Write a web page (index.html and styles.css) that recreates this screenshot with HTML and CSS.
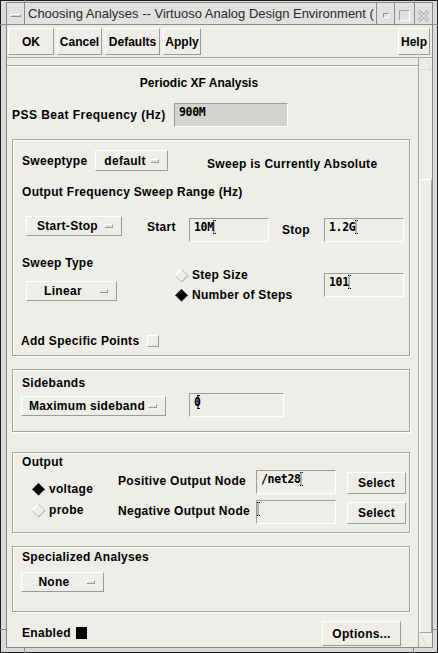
FILE: index.html
```html
<!DOCTYPE html>
<html>
<head>
<meta charset="utf-8">
<title>Choosing Analyses</title>
<link rel="stylesheet" href="styles.css">
</head>
<body>
<div class="window">
  <div class="client">
    <div class="titlebar">
      <div class="tb-menu"><span class="tb-dash"></span></div>
      <div class="tb-title">Choosing Analyses -- Virtuoso Analog Design Environment (</div>
      <div class="tb-btn tb-min"><span class="tb-minbox"></span></div>
      <div class="tb-btn tb-max"><span class="tb-maxbox"></span></div>
      <div class="tb-btn tb-close">
        <svg width="13" height="12" viewBox="0 0 13 12">
          <path d="M1.5 1 L11.5 11 M11.5 1 L1.5 11" stroke="#a9a9a9" stroke-width="3.4" fill="none"/>
          <path d="M1.5 1 L11.5 11 M11.5 1 L1.5 11" stroke="#e4e4e2" stroke-width="1.4" fill="none"/>
        </svg>
      </div>
    </div>

    <div class="toolbar">
      <div class="btn b-ok">OK</div>
      <div class="btn b-cancel">Cancel</div>
      <div class="btn b-defaults">Defaults</div>
      <div class="btn b-apply">Apply</div>
      <div class="btn b-help">Help</div>
    </div>

    <div class="scrollarea">
      <div class="viewport">
        <div class="topline"></div>
        <div class="form-title">Periodic XF Analysis</div>

        <div class="pss-row">
          <span class="pss-label">PSS Beat Frequency (Hz)</span>
          <div class="field field-disabled w-pss">900M</div>
        </div>

        <div class="group g-sweep">
          <div class="row-a">
            <span class="lbl-sweeptype">Sweeptype</span>
            <div class="dd w-default"><span class="dd-t">default</span><i class="dd-ind"></i></div>
            <span class="abs-note">Sweep is Currently Absolute</span>
          </div>
          <div class="row-b">Output Frequency Sweep Range (Hz)</div>
          <div class="row-c">
            <div class="dd w-startstop"><span class="dd-t">Start-Stop</span><i class="dd-ind"></i></div>
            <span class="lbl-start">Start</span>
            <div class="field w-80 f-c">10M<svg class="caret" width="3" height="14" viewBox="0 0 3 14"><path d="M1 0.5 V13.5" stroke="#000" stroke-dasharray="1 1"/><path d="M0 0.5 H3 M0 13.5 H3" stroke="#000" stroke-dasharray="1 1"/></svg></div>
            <span class="lbl-stop">Stop</span>
            <div class="field w-80 f-c">1.2G<svg class="caret" width="3" height="14" viewBox="0 0 3 14"><path d="M1 0.5 V13.5" stroke="#000" stroke-dasharray="1 1"/><path d="M0 0.5 H3 M0 13.5 H3" stroke="#000" stroke-dasharray="1 1"/></svg></div>
          </div>
          <div class="row-e">
            <div class="col-type">
              <div class="lbl-line">Sweep Type</div>
              <div class="dd w-linear"><span class="dd-t">Linear</span><i class="dd-ind"></i></div>
            </div>
            <div class="col-radios">
              <div class="radio">
                <svg width="15" height="15" viewBox="0 0 15 15"><path d="M1 7.5 L7.5 1" stroke="#fff" stroke-width="1.3" fill="none"/><path d="M7.5 1 L14 7.5" stroke="#b9b8b3" fill="none"/><path d="M1 7.5 L7.5 14" stroke="#b9b8b3" fill="none"/><path d="M7.5 14 L14 7.5" stroke="#8e8e8e" fill="none"/></svg>
                <span>Step Size</span>
              </div>
              <div class="radio r2">
                <svg width="15" height="15" viewBox="0 0 15 15"><path d="M1 7.5 L7.5 1 L14 7.5 L7.5 14 Z" fill="#000"/><path d="M1.5 8 L7.5 14 L13.5 8" stroke="#d8d8d8" fill="none"/></svg>
                <span>Number of Steps</span>
              </div>
            </div>
            <div class="field w-80 f-e">101<svg class="caret" width="3" height="14" viewBox="0 0 3 14"><path d="M1 0.5 V13.5" stroke="#000" stroke-dasharray="1 1"/><path d="M0 0.5 H3 M0 13.5 H3" stroke="#000" stroke-dasharray="1 1"/></svg></div>
          </div>
          <div class="row-f">
            <span class="lbl-asp">Add Specific Points</span>
            <span class="chk"></span>
          </div>
        </div>

        <div class="group g-side">
          <div class="lbl-line">Sidebands</div>
          <div class="side-row">
            <div class="dd w-maxside"><span class="dd-t">Maximum sideband</span><i class="dd-ind"></i></div>
            <div class="field w-side">0<svg class="caret c0" width="3" height="14" viewBox="0 0 3 14"><path d="M1 0.5 V13.5" stroke="#000"/><path d="M0 0.5 H3 M0 13.5 H3" stroke="#000"/></svg></div>
          </div>
        </div>

        <div class="group g-out">
          <div class="lbl-out">Output</div>
          <div class="out-sec">
            <div class="out-radios">
              <div class="radio">
                <svg width="15" height="15" viewBox="0 0 15 15"><path d="M1 7.5 L7.5 1 L14 7.5 L7.5 14 Z" fill="#000"/><path d="M1.5 8 L7.5 14 L13.5 8" stroke="#d8d8d8" fill="none"/></svg>
                <span>voltage</span>
              </div>
              <div class="radio r-probe">
                <svg width="15" height="15" viewBox="0 0 15 15"><path d="M1 7.5 L7.5 1" stroke="#fff" stroke-width="1.3" fill="none"/><path d="M7.5 1 L14 7.5" stroke="#b9b8b3" fill="none"/><path d="M1 7.5 L7.5 14" stroke="#b9b8b3" fill="none"/><path d="M7.5 14 L14 7.5" stroke="#8e8e8e" fill="none"/></svg>
                <span>probe</span>
              </div>
            </div>
            <div class="out-nodes">
              <div class="node-row">
                <span class="lbl-node">Positive Output Node</span>
                <div class="field w-80">/net28<svg class="caret" width="3" height="14" viewBox="0 0 3 14"><path d="M1 0.5 V13.5" stroke="#000" stroke-dasharray="1 1"/><path d="M0 0.5 H3 M0 13.5 H3" stroke="#000" stroke-dasharray="1 1"/></svg></div>
                <div class="btn b-select">Select</div>
              </div>
              <div class="node-row nr2">
                <span class="lbl-node">Negative Output Node</span>
                <div class="field w-80 f-empty"><svg class="caret" width="3" height="14" viewBox="0 0 3 14"><path d="M1 0.5 V13.5" stroke="#000" stroke-dasharray="1 1"/><path d="M0 0.5 H3 M0 13.5 H3" stroke="#000" stroke-dasharray="1 1"/></svg></div>
                <div class="btn b-select">Select</div>
              </div>
            </div>
          </div>
        </div>

        <div class="group g-spec">
          <div class="lbl-line">Specialized Analyses</div>
          <div class="dd w-none"><span class="dd-t">None</span><i class="dd-ind"></i></div>
        </div>

        <div class="enabled-row">
          <span class="lbl-enabled">Enabled</span>
          <span class="chk-on"></span>
          <div class="btn b-options">Options...</div>
        </div>
      </div>

      <div class="scrollbar">
        <div class="sb-up">
          <svg width="12" height="11" viewBox="0 0 12 11"><path d="M0.5 10.5 L6 0.5" stroke="#fff" stroke-dasharray="1 1" fill="none"/><path d="M6 0.5 L11.5 10.5 L0.5 10.5" stroke="#c8c7c3" stroke-dasharray="1 1" fill="none"/></svg>
        </div>
        <div class="sb-track"><div class="sb-thumb"></div></div>
        <div class="sb-down">
          <svg width="12" height="11" viewBox="0 0 12 11"><path d="M0.5 0.5 L11.5 0.5 L6 10.5" stroke="#fff" stroke-dasharray="1 1" fill="none"/><path d="M6 10.5 L0.5 0.5" stroke="#c8c7c3" stroke-dasharray="1 1" fill="none"/></svg>
        </div>
      </div>
    </div>
  </div>

  <span class="tick tick-tl-v"></span>
  <span class="tick tick-tr-v"></span>
  <span class="tick tick-bl-v"></span>
  <span class="tick tick-br-v"></span>
  <span class="tick tick-lt-h"></span>
  <span class="tick tick-lb-h"></span>
  <span class="tick tick-rt-h"></span>
  <span class="tick tick-rb-h"></span>
</div>
</body>
</html>
```

FILE: styles.css
```css
* { box-sizing: border-box; }
html, body { margin: 0; padding: 0; }
body {
  width: 438px;
  height: 653px;
  overflow: hidden;
  background: #000;
  font-family: "Liberation Sans", Arial, sans-serif;
  font-weight: bold;
  font-size: 12px;
  color: #000;
}

.window {
  position: relative;
  width: 438px;
  height: 653px;
  border: 1px solid #1c1c1c;
  background: #dadad8;
  padding: 1px 4px 4px 5px;
}

.client {
  height: 100%;
  border: 1px solid #8a8a8a;
  background: #eeede8;
  display: flex;
  flex-direction: column;
}

/* title bar */
.titlebar {
  height: 22px;
  flex: none;
  display: flex;
  border-bottom: 1px solid #8a8a8a;
  background: #e1e1df;
  font-weight: normal;
}
.tb-menu { width: 18px; border-right: 1px solid #8a8a8a; display: flex; justify-content: center; }
.tb-dash {
  width: 11px; height: 3px; margin-top: 11px;
  border: 1px solid; border-color: #fff #8c8c8c #8c8c8c #fff;
  background: #d0d0ce;
}
.tb-title {
  flex: 1;
  min-width: 0;
  padding-left: 3px;
  overflow: hidden;
  white-space: nowrap;
  line-height: 21px;
  font-size: 13px;
  color: #2a2a2a;
}
.tb-btn { border-left: 1px solid #8a8a8a; display: flex; justify-content: center; align-items: flex-start; }
.tb-min { width: 18px; }
.tb-max { width: 20px; }
.tb-close { width: 18px; }
.tb-minbox {
  width: 6px; height: 5px; margin-top: 10px;
  border: 1px solid; border-color: #8c8c8c #fff #fff #8c8c8c;
}
.tb-maxbox {
  width: 11px; height: 11px; margin-top: 7px;
  border: 1px solid; border-color: #a0a0a0 #fff #fff #a0a0a0;
}
.tb-close svg { margin-top: 7px; }

/* toolbar */
.toolbar {
  height: 33px;
  flex: none;
  display: flex;
  align-items: flex-start;
  gap: 3px;
  padding: 3px 2px 0 1px;
  border-bottom: 1px solid #a4a4a4;
}
.btn {
  display: flex;
  align-items: center;
  justify-content: center;
  border: 1px solid;
  border-color: #fff #9a9a9a #9a9a9a #fff;
  background: #eeede8;
  white-space: nowrap;
}
.toolbar .btn { height: 27px; }
.b-ok { width: 46px; }
.b-cancel { width: 45px; }
.b-defaults { width: 55px; }
.b-apply { width: 38px; }
.b-help { width: 32px; margin-left: auto; }

/* scroll area */
.scrollarea { flex: 1; display: flex; min-height: 0; }
.viewport { flex: 1; overflow: hidden; letter-spacing: 0.3px; }

.topline {
  margin-top: 7px;
  height: 2px;
  border-top: 1px solid #a4a4a4;
  border-bottom: 1px solid #fff;
}
.form-title { width: 384px; text-align: center; line-height: 16px; margin-top: 8px; letter-spacing: 0; }

.pss-row { display: flex; align-items: center; height: 24px; margin-top: 12px; padding-left: 5px; }
.pss-label { width: 162px; white-space: nowrap; letter-spacing: 0.45px; }

/* text fields */
.field {
  height: 24px;
  border: 1px solid;
  border-color: #9c9c9c #fff #fff #9c9c9c;
  background: #eeede8;
  font-family: "DejaVu Sans Mono", "Liberation Mono", monospace;
  font-weight: bold;
  font-size: 11.5px;
  letter-spacing: -0.3px;
  line-height: 14px;
  padding: 1px 0 0 4px;
  white-space: nowrap;
  flex: none;
}
.field-disabled { background: #d5d3cd; }
.w-pss { width: 114px; }
.w-80 { width: 80px; }
.w-side { width: 95px; margin-left: 23px; }
.caret { vertical-align: top; margin-left: -1px; }
.caret.c0 { margin-left: -4px; }

/* group boxes */
.group {
  width: 398px;
  margin: 12px 0 0 5px;
  border: 1px solid #a4a4a4;
  box-shadow: inset 1px 1px 0 #fff, 1px 1px 0 #fff;
}

/* option menus */
.dd {
  display: flex;
  align-items: center;
  height: 20px;
  border: 1px solid;
  border-color: #fff #9a9a9a #9a9a9a #fff;
  flex: none;
}
.dd-t { flex: 1; text-align: center; white-space: nowrap; }
.dd-ind {
  width: 9px; height: 4px;
  margin-right: 8px;
  border: 1px solid;
  border-color: #fff #9a9a9a #9a9a9a #fff;
  background: #e2e1dc;
}
.w-default { width: 73px; padding-left: 4px; }
.w-startstop { width: 96px; padding-left: 4px; }
.w-linear { width: 91px; margin-left: 4px; margin-top: 10px; }
.w-maxside { width: 145px; margin-left: 8px; margin-top: 3px; padding-left: 4px; }
.w-none { width: 83px; margin-left: 8px; margin-top: 7px; }

.lbl-line { line-height: 16px; padding-left: 9px; white-space: nowrap; }

/* sweep group */
.g-sweep { margin-top: 12px; padding: 10px 0 6px 0; }
.row-a { display: flex; align-items: center; height: 21px; padding-left: 9px; }
.row-a .dd { height: 21px; }
.lbl-sweeptype { width: 73px; }
.abs-note { margin-left: 39px; margin-top: 6px; white-space: nowrap; }
.row-b { margin-top: 13px; line-height: 16px; padding-left: 9px; white-space: nowrap; }
.row-c { display: flex; align-items: flex-start; margin-top: 16px; padding-left: 13px; }
.lbl-start { width: 42px; margin-left: 25px; margin-top: 3px; line-height: 16px; }
.lbl-stop { width: 42px; margin-left: 13px; margin-top: 6px; line-height: 16px; }
.f-c { margin-top: 2px; }
.row-e { display: flex; align-items: flex-start; margin-top: 13px; padding-left: 9px; }
.col-type { width: 152px; display: flex; flex-direction: column; align-items: flex-start; }
.col-type .lbl-line { padding-left: 0; }
.col-radios { width: 150px; padding-top: 12px; }
.radio { display: flex; align-items: center; height: 16px; gap: 3px; white-space: nowrap; }
.radio svg { flex: none; }
.r2 { margin-top: 4px; }
.f-e { margin-top: 18px; }
.row-f { display: flex; align-items: center; height: 16px; margin-top: 30px; padding-left: 8px; }
.lbl-asp { width: 126px; white-space: nowrap; }
.chk {
  width: 12px; height: 12px;
  border: 1px solid;
  border-color: #fff #9a9a9a #9a9a9a #fff;
}

/* sidebands */
.g-side { margin-top: 13px; padding: 5px 0 14px 0; }
.side-row { display: flex; align-items: flex-start; margin-top: 2px; }

/* output */
.g-out { margin-top: 20px; padding: 2px 0 8px 0; }
.lbl-out { line-height: 15px; padding-left: 9px; }
.out-sec { display: flex; align-items: flex-start; }
.out-radios { width: 87px; margin-left: 18px; padding-top: 11px; }
.r-probe { margin-top: 5px; }
.node-row { display: flex; align-items: flex-start; height: 24px; }
.nr2 { margin-top: 6px; }
.lbl-node { width: 138px; margin-top: 3px; line-height: 16px; white-space: nowrap; }
.b-select { width: 59px; height: 22px; margin-left: 11px; margin-top: 2px; }
.f-empty { padding-left: 1px; }

/* specialized */
.g-spec { margin-top: 13px; padding: 2px 0 19px 0; }

/* enabled row */
.enabled-row { display: flex; align-items: flex-start; height: 25px; margin-top: 9px; }
.lbl-enabled { width: 54px; margin-left: 15px; margin-top: 4px; line-height: 16px; }
.chk-on { width: 11px; height: 12px; margin-top: 6px; background: #000; }
.b-options { width: 79px; height: 25px; margin-left: auto; margin-right: 17px; }

/* scrollbar */
.scrollbar {
  width: 14px;
  flex: none;
  border-left: 1px solid #a4a4a4;
  display: flex;
  flex-direction: column;
}
.sb-up { height: 12px; display: flex; justify-content: center; padding-top: 1px; }
.sb-track { flex: 1; display: flex; flex-direction: column; padding-top: 109px; }
.sb-thumb {
  flex: 1;
  border: 1px solid;
  border-color: #fff #a4a4a4 #a4a4a4 #fff;
}
.sb-down { height: 14px; display: flex; justify-content: center; padding-top: 1px; }

/* window frame corner marks */
.tick { position: absolute; background: #8a8a8a; }
.tick-tl-v { left: 23px; top: -1px; width: 1px; height: 3px; }
.tick-tr-v { left: 412px; top: -1px; width: 1px; height: 3px; }
.tick-bl-v { left: 23px; bottom: -1px; width: 1px; height: 5px; }
.tick-br-v { left: 412px; bottom: -1px; width: 1px; height: 5px; }
.tick-lt-h { left: -1px; top: 23px; width: 6px; height: 1px; }
.tick-lb-h { left: -1px; top: 628px; width: 6px; height: 1px; }
.tick-rt-h { right: -1px; top: 23px; width: 5px; height: 1px; }
.tick-rb-h { right: -1px; top: 628px; width: 5px; height: 1px; }
```
